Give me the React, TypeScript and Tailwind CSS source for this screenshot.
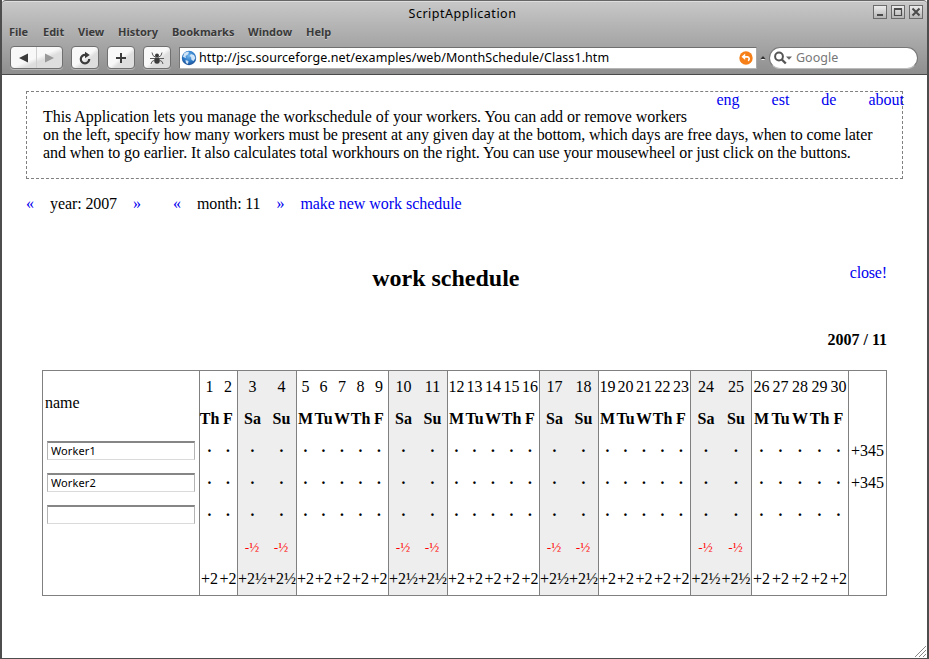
import React from "react";

type Group = { days: number[]; names: string[]; widths: string[]; off: boolean };

const WEEK = ["M", "Tu", "W", "Th", "F"];
const FIVE = ["w-[17px]", "w-[19px]", "w-[18px]", "w-[19px]", "w-[18px]"];
const REST = ["w-[29px]", "w-[29px]"];

const groups: Group[] = [
  { days: [1, 2], names: ["Th", "F"], widths: ["w-[19px]", "w-[18px]"], off: false },
  { days: [3, 4], names: ["Sa", "Su"], widths: REST, off: true },
  { days: [5, 6, 7, 8, 9], names: WEEK, widths: FIVE, off: false },
  { days: [10, 11], names: ["Sa", "Su"], widths: REST, off: true },
  { days: [12, 13, 14, 15, 16], names: WEEK, widths: FIVE, off: false },
  { days: [17, 18], names: ["Sa", "Su"], widths: REST, off: true },
  { days: [19, 20, 21, 22, 23], names: WEEK, widths: FIVE, off: false },
  { days: [24, 25], names: ["Sa", "Su"], widths: ["w-[30px]", "w-[30px]"], off: true },
  {
    days: [26, 27, 28, 29, 30],
    names: WEEK,
    widths: ["w-[19px]", "w-[19px]", "w-[20px]", "w-[19px]", "w-[19px]"],
    off: false,
  },
];

const UI = "font-['Noto_Sans','Open_Sans',sans-serif]";

function Cell({ children, className = "" }: { children?: React.ReactNode; className?: string }) {
  return (
    <div className={`flex h-8 items-center justify-center whitespace-nowrap ${className}`}>
      {children}
    </div>
  );
}

function DayGroup({ group }: { group: Group }) {
  return (
    <div className={`flex border-l border-[#808080] ${group.off ? "bg-[#eeeeee]" : ""}`}>
      {group.days.map((day, i) => (
        <div key={day} className={`flex flex-col ${group.widths[i]}`}>
          <Cell>{day}</Cell>
          <Cell className="font-bold">{group.names[i]}</Cell>
          <Cell className="font-bold">·</Cell>
          <Cell className="font-bold">·</Cell>
          <Cell className="font-bold">·</Cell>
          <Cell className="pt-[2px] pr-px text-[13.3px] text-[#ff0000]">{group.off ? "-½" : ""}</Cell>
          <Cell>{group.off ? "+2½" : "+2"}</Cell>
        </div>
      ))}
    </div>
  );
}

function WorkerInput({ value }: { value: string }) {
  return (
    <div className="flex h-8 items-center pb-[2px] pl-1">
      <input
        defaultValue={value}
        className={`h-[19px] w-[148px] border border-t-2 border-[#b4b4b4] border-t-[#868686] border-b-[#dadada] bg-white px-[3px] text-[11px] leading-none tracking-[0.1px] text-black outline-none ${UI}`}
      />
    </div>
  );
}

function ToolButton({ children, className = "w-[28px]" }: { children: React.ReactNode; className?: string }) {
  return (
    <div
      className={`flex h-[23px] items-center justify-center rounded-[4px] border border-[#707070] bg-linear-to-br from-[#f8f8f8] from-50% to-[#dedede] to-62% shadow-[0_1px_0_#b8b8b8] ${className}`}
    >
      {children}
    </div>
  );
}

function WindowButton({ children }: { children: React.ReactNode }) {
  return (
    <div className="flex h-[14px] w-[14px] items-center justify-center border border-[#6b6b6b] bg-linear-to-b from-[#ececec] to-[#b5b5b5]">
      <svg width="12" height="12" viewBox="0 0 12 12" fill="none" stroke="#4a4a4a">
        {children}
      </svg>
    </div>
  );
}

const menu: [string, string][] = [
  ["File", "w-[34px]"],
  ["Edit", "w-[35px]"],
  ["View", "w-[40px]"],
  ["History", "w-[54px]"],
  ["Bookmarks", "w-[76px]"],
  ["Window", "w-[58px]"],
  ["Help", "w-[40px]"],
];

function Chrome() {
  return (
    <header
      className={`flex h-[75px] flex-col rounded-t-[4px] border-t border-b border-[#4a4a4a] border-t-[#666] bg-linear-to-b from-[#c8c8c8] to-[#8f8f8f] shadow-[inset_0_1px_0_#dedede] ${UI}`}
    >
      <div className="flex h-[24px] items-center pr-1">
        <div className="w-[50px]" />
        <div className="flex-1 pt-[2px] text-center text-[12.5px] tracking-[0.5px] text-black">ScriptApplication</div>
        <div className="flex gap-1 pb-[2px]">
          <WindowButton>
            <path d="M3 9h6" strokeWidth="2" />
          </WindowButton>
          <WindowButton>
            <path d="M2.5 3h7v6.5h-7z" strokeWidth="1.2" />
            <path d="M2 3h8" strokeWidth="2" />
          </WindowButton>
          <WindowButton>
            <path d="M2.500 2.500l7 7M9.500 2.500l-7 7" strokeWidth="2" />
          </WindowButton>
        </div>
      </div>
      <nav className="flex h-[14px] items-center pl-[7px] text-[11px] font-bold text-[#3a3a3a] [text-shadow:0_1px_0_#c8c8c8]">
        {menu.map(([label, width]) => (
          <span key={label} className={`whitespace-nowrap ${width}`}>
            {label}
          </span>
        ))}
      </nav>
      <div className="flex h-[35px] items-center pl-2 pt-[2px]">
        <ToolButton className="w-[53px]">
          <svg width="51" height="21" viewBox="0 0 51 21">
            <path d="M8 11l9-4.500v9z" fill="#3c3c3c" />
            <path d="M43 11l-9-4.500v9z" fill="#999" />
            <path d="M25.500 0v21" stroke="#cfcfcf" />
          </svg>
        </ToolButton>
        <div className="w-2" />
        <ToolButton>
          <svg width="14" height="14" viewBox="0 0 14 14">
            <path d="M11.200 8A4.200 4.200 0 1 1 7.500 4" fill="none" stroke="#3c3c3c" strokeWidth="2.200" />
            <path d="M7 .8l4.800 3.200L7 7.200z" fill="#3c3c3c" />
          </svg>
        </ToolButton>
        <div className="w-2" />
        <ToolButton>
          <svg width="12" height="12" viewBox="0 0 12 12">
            <path d="M6 1v10M1 6h10" stroke="#3c3c3c" strokeWidth="2" />
          </svg>
        </ToolButton>
        <div className="w-2" />
        <ToolButton>
          <svg width="16" height="14" viewBox="0 0 16 14">
            <ellipse cx="8" cy="9.600" rx="2.800" ry="3.200" fill="#3a3a3a" />
            <circle cx="8" cy="4.400" r="2" fill="#3a3a3a" />
            <path
              d="M7 6.500L4 4.500 3 1.500M9 6.500l3-2 1-3M6 7.500H1M10 7.500h5M6 9l-3 1.500-1 2.500M10 9l3 1.500 1 2.500"
              fill="none"
              stroke="#5a5a5a"
              strokeWidth="1"
            />
          </svg>
        </ToolButton>
        <div className="w-2" />
        <div className="flex h-[22px] w-[578px] items-center border border-t-[#6f6f6f] border-r-[#aaa] border-b-[#b5b5b5] border-l-[#777] bg-white">
          <svg width="16" height="16" viewBox="0 0 16 16" className="ml-[1px] shrink-0">
            <defs>
              <radialGradient id="globe" cx=".5" cy=".35" r=".65">
                <stop offset="0" stopColor="#75b8ee" />
                <stop offset=".6" stopColor="#2b78c6" />
                <stop offset="1" stopColor="#1b4f94" />
              </radialGradient>
            </defs>
            <circle cx="8" cy="8" r="7.200" fill="url(#globe)" />
            <path
              d="M3 3.500c2-2 4-2.200 5-1.500L7 4.500 4.500 6 5 8 2 7zM10 4l3 1 1.500 3-2 3-2-1-.5-3-1.500-1zM4.500 10l3 1-.5 3-2-1z"
              fill="#cfe4f6"
            />
          </svg>
          <span className="ml-[2px] flex-1 whitespace-nowrap text-[12.5px] tracking-[0.08px] text-black">
            http://jsc.sourceforge.net/examples/web/MonthSchedule/Class1.htm
          </span>
          <svg width="14" height="14" viewBox="0 0 14 14" className="mr-[3px]">
            <circle cx="7" cy="7" r="6.700" fill="#f77f17" />
            <path d="M5 5.800h3a2.100 2.100 0 0 1 1 4" fill="none" stroke="#fff" strokeWidth="1.700" />
            <path d="M2.500 5.800l3.700-3.200v6.400z" fill="#fff" />
          </svg>
        </div>
        <svg width="12" height="12" viewBox="0 0 12 12">
          <path d="M3.500 7l2.500-3 2.500 3z" fill="#333" />
          <path d="M4.500 7.500h3" stroke="#eee" />
        </svg>
        <div className="flex h-[22px] w-[149px] items-center rounded-full border border-[#777] border-b-[#bbb] bg-white pl-1">
          <svg width="20" height="14" viewBox="0 0 20 14">
            <circle cx="5" cy="5.500" r="3.900" fill="none" stroke="#555" strokeWidth="2" />
            <path d="M7.800 8.500l4 4" stroke="#555" strokeWidth="2.400" />
            <path d="M12 5.500h6l-3 3.200z" fill="#666" />
          </svg>
          <span className="ml-[2px] text-[12.5px] text-[#777]">Google</span>
        </div>
      </div>
    </header>
  );
}

export default function App() {
  return (
    <div className="relative flex h-[659px] w-[929px] flex-col overflow-hidden border-r-2 border-b border-l-2 border-[#4d4d4d] bg-white font-['Liberation_Serif','Times_New_Roman',serif] text-[16px] leading-[18px] text-black">
      <Chrome />
      <main className="flex flex-col pl-6 pr-6">
        <section className="mt-4 h-[88px] w-[877px] border border-dashed border-[#808080]">
          <div className="-mt-px mb-px -mr-[2px] flex h-4 justify-end gap-8 text-[#0000ee]">
            <a>eng</a>
            <a>est</a>
            <a>de</a>
            <a>about</a>
          </div>
          <p className="flex flex-col whitespace-nowrap pl-4">
            <span className="tracking-[-0.055px]">
              This Application lets you manage the workschedule of your workers. You can add or remove workers
            </span>
            <span className="tracking-[-0.114px]">
              on the left, specify how many workers must be present at any given day at the bottom, which days are free
              days, when to come later
            </span>
            <span className="tracking-[-0.093px]">
              and when to go earlier. It also calculates total workhours on the right. You can use your mousewheel or
              just click on the buttons.
            </span>
          </p>
        </section>
        <div className="mt-4 flex gap-4 text-[#0000ee]">
          <a>«</a>
          <span className="tracking-[-0.1px] text-black">year: 2007</span>
          <a>»</a>
          <a className="ml-4">«</a>
          <span className="tracking-[-0.15px] text-black">month: 11</span>
          <a>»</a>
          <a className="tracking-[-0.04px]">make new work schedule</a>
        </div>
        <section className="ml-4 mt-[51px] flex w-[845px] flex-col">
          <div className="flex">
            <div className="w-[37px]" />
            <h1 className="flex-1 pl-[2px] pr-[39px] text-center text-[24px] font-bold leading-[28px]">
              work schedule
            </h1>
            <a className="tracking-[-0.15px] text-[#0000ee]">close!</a>
          </div>
          <div className="mt-[39px] text-right font-bold">2007 / 11</div>
          <div className="mt-[21px] flex h-[226px] border border-[#808080]">
            <div className="flex w-[156px] flex-col">
              <div className="flex h-16 items-center pl-[2px]">name</div>
              <WorkerInput value="Worker1" />
              <WorkerInput value="Worker2" />
              <WorkerInput value="" />
            </div>
            {groups.map((group) => (
              <DayGroup key={group.days[0]} group={group} />
            ))}
            <div className="flex flex-1 flex-col border-l border-[#808080] pt-16">
              <Cell>+345</Cell>
              <Cell>+345</Cell>
            </div>
          </div>
        </section>
      </main>
      <svg className="absolute bottom-0 right-0" width="13" height="13" viewBox="0 0 13 13" fill="none" stroke="#888">
        <path d="M1 12L12 1M5 12l7-7M9 12l3-3" />
      </svg>
    </div>
  );
}
